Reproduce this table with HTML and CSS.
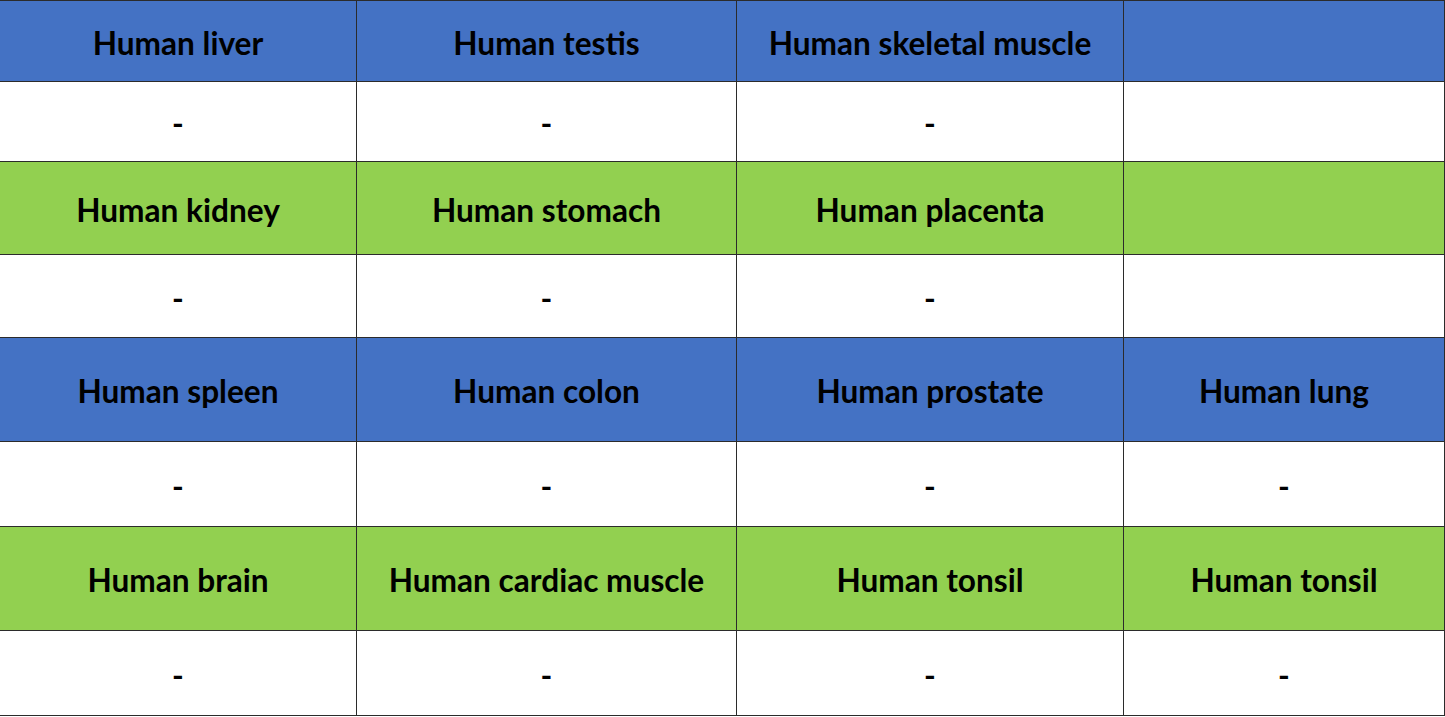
FILE: index.html
```html
<!DOCTYPE html>
<html lang="en">
<head>
<meta charset="utf-8">
<title>Human tissues</title>
<link rel="stylesheet" href="styles.css">
</head>
<body>
<div class="grid">
  <div class="cell blue r1">Human liver</div>
  <div class="cell blue r1">Human testis</div>
  <div class="cell blue r1">Human skeletal muscle</div>
  <div class="cell blue r1"></div>

  <div class="cell white r2">-</div>
  <div class="cell white r2">-</div>
  <div class="cell white r2">-</div>
  <div class="cell white r2"></div>

  <div class="cell green r3">Human kidney</div>
  <div class="cell green r3">Human stomach</div>
  <div class="cell green r3">Human placenta</div>
  <div class="cell green r3"></div>

  <div class="cell white r4">-</div>
  <div class="cell white r4">-</div>
  <div class="cell white r4">-</div>
  <div class="cell white r4"></div>

  <div class="cell blue r5">Human spleen</div>
  <div class="cell blue r5">Human colon</div>
  <div class="cell blue r5">Human prostate</div>
  <div class="cell blue r5">Human lung</div>

  <div class="cell white r6">-</div>
  <div class="cell white r6">-</div>
  <div class="cell white r6">-</div>
  <div class="cell white r6">-</div>

  <div class="cell green r7">Human brain</div>
  <div class="cell green r7">Human cardiac muscle</div>
  <div class="cell green r7">Human tonsil</div>
  <div class="cell green r7">Human tonsil</div>

  <div class="cell white r8">-</div>
  <div class="cell white r8">-</div>
  <div class="cell white r8">-</div>
  <div class="cell white r8">-</div>
</div>
</body>
</html>
```
FILE: styles.css
```css
html, body {
  margin: 0;
  padding: 0;
  background: #ffffff;
}
.grid {
  display: grid;
  grid-template-columns: 357px 380px 387px 321px;
  grid-template-rows: 81px 80px 93px 83px 104px 85px 104px 85px;
  border-top: 1px solid #2b2b2b;
  width: max-content;
}
.cell {
  box-sizing: border-box;
  border-right: 1px solid #2b2b2b;
  border-bottom: 1px solid #2b2b2b;
  display: flex;
  align-items: center;
  justify-content: center;
  font-family: Lato, "Open Sans", sans-serif;
  font-weight: 700;
  font-size: 31.6px;
  color: #000000;
  padding-top: 3px;
}
.blue { background: #4472c4; }
.green { background: #92d050; }
.white { background: #ffffff; }
```
